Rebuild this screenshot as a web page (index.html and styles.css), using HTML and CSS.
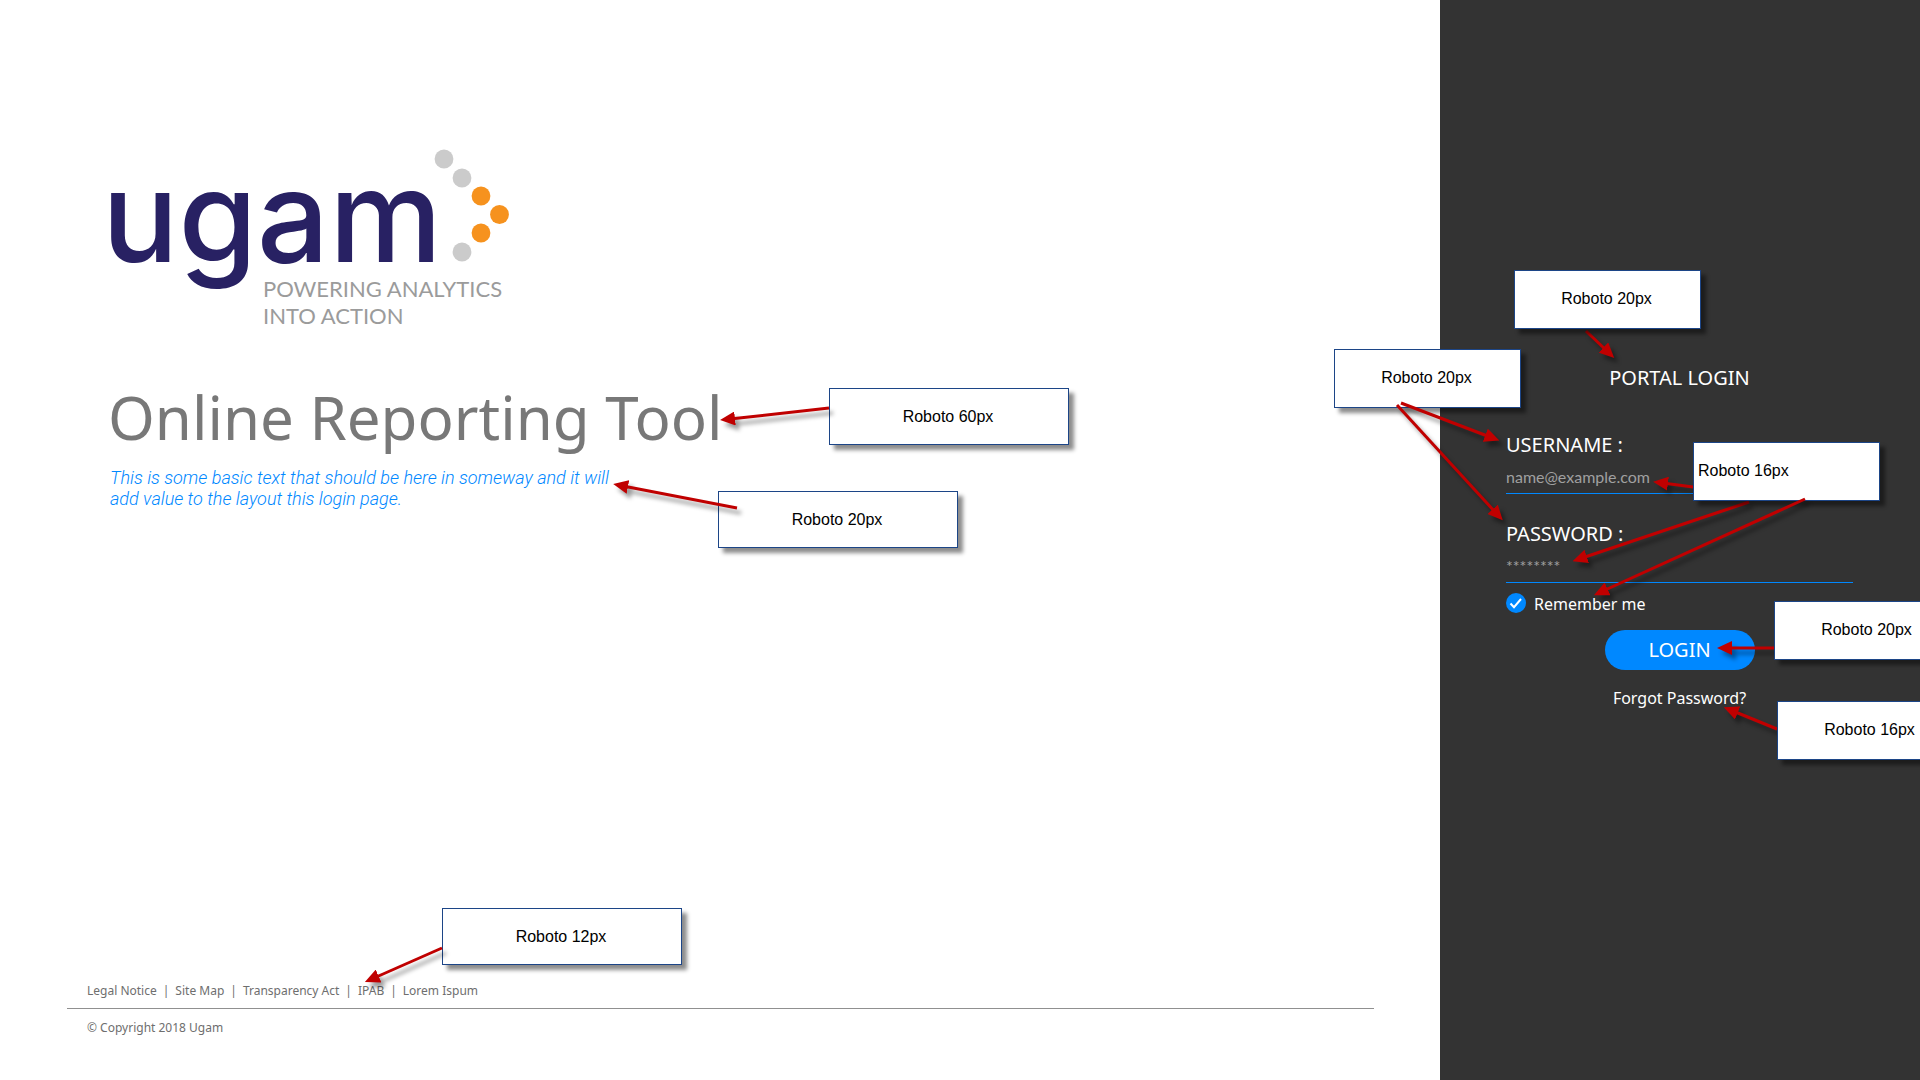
FILE: index.html
```html
<!DOCTYPE html>
<html lang="en">
<head>
<meta charset="utf-8">
<title>Ugam - Online Reporting Tool</title>
<link rel="stylesheet" href="styles.css">
</head>
<body>
<div class="page">
  <main class="intro">
    <svg class="logo" viewBox="0 0 400 184" role="img" aria-label="Ugam, powering analytics into action">
      <text class="logo-name" x="-8" y="116">ugam</text>
      <g class="logo-grey">
        <circle cx="334" cy="13" r="9.4"/>
        <circle cx="352" cy="32" r="9.4"/>
        <circle cx="352" cy="106" r="9.4"/>
      </g>
      <g class="logo-orange">
        <circle cx="371" cy="50" r="9.4"/>
        <circle cx="389.5" cy="68.5" r="9.4"/>
        <circle cx="371" cy="87" r="9.4"/>
      </g>
      <text class="logo-tag" x="153" y="151">POWERING ANALYTICS</text>
      <text class="logo-tag" x="153" y="178">INTO ACTION</text>
    </svg>
    <h1 class="title">Online Reporting Tool</h1>
    <p class="lead">This is some basic text that should be here in someway and it will add value to the layout this login page.</p>

    <footer class="footer">
      <ul class="links">
        <li><a href="#">Legal Notice</a></li>
        <li><a href="#">Site Map</a></li>
        <li><a href="#">Transparency Act</a></li>
        <li><a href="#">IPAB</a></li>
        <li><a href="#">Lorem Ispum</a></li>
      </ul>
      <p class="copyright">© Copyright 2018 Ugam</p>
      <div class="note note-wide note-footer">Roboto 12px</div>
      <svg class="arrows arrows-footer" aria-hidden="true">
        <line x1="375" y1="40" x2="307" y2="70"/>
      </svg>
    </footer>

    <div class="note note-wide note-title">Roboto 60px</div>
    <div class="note note-wide note-lead">Roboto 20px</div>
    <svg class="arrows arrows-intro" aria-hidden="true">
      <defs>
        <marker id="head" viewBox="0 0 15 14" markerWidth="15" markerHeight="14" refX="5" refY="7" orient="auto" markerUnits="userSpaceOnUse">
          <path d="M0 0 15 7 0 14z"/>
        </marker>
      </defs>
      <line x1="829" y1="408" x2="730" y2="419"/>
      <line x1="737" y1="508" x2="623" y2="486"/>
    </svg>
  </main>

  <aside class="panel">
    <form class="form">
      <h2 class="form-title">PORTAL LOGIN</h2>
      <div class="field">
        <label for="user">USERNAME :</label>
        <input id="user" type="text" placeholder="name@example.com">
      </div>
      <div class="field">
        <label for="pass">PASSWORD :</label>
        <input id="pass" type="password" placeholder="********">
      </div>
      <label class="remember">
        <span class="tick">
          <input type="checkbox" checked>
          <svg viewBox="0 0 20 20" aria-hidden="true"><path d="M4.5 10.5 8 14.2 15 6"/></svg>
        </span>
        Remember me
      </label>
      <button class="login" type="button">LOGIN</button>
      <a class="forgot" href="#">Forgot Password?</a>
    </form>

    <svg class="arrows arrows-panel" aria-hidden="true">
      <line x1="146" y1="331" x2="167" y2="351"/>
      <line x1="253" y1="487" x2="223" y2="483"/>
      <line x1="309" y1="502" x2="142" y2="558"/>
      <line x1="334" y1="648" x2="287" y2="648"/>
      <line x1="337" y1="729" x2="293" y2="711"/>
    </svg>
    <div class="note note-portal">Roboto 20px</div>
    <div class="note note-labels">Roboto 20px</div>
    <div class="note note-inputs">Roboto 16px</div>
    <div class="note note-login">Roboto 20px</div>
    <div class="note note-forgot">Roboto 16px</div>
    <svg class="arrows arrows-panel" aria-hidden="true">
      <line x1="-39" y1="403" x2="50" y2="437"/>
      <line x1="-43" y1="405" x2="56" y2="513"/>
      <line x1="365" y1="499" x2="163" y2="591"/>
    </svg>
  </aside>
</div>
</body>
</html>
```
FILE: styles.css
```css
* {
  box-sizing: border-box;
}

body {
  margin: 0;
  background: #fff;
  font-family: "Noto Sans", sans-serif;
}

h1, h2, p, ul {
  margin: 0;
  padding: 0;
  font-weight: 400;
}

a {
  color: inherit;
  text-decoration: none;
}

.page {
  display: grid;
  grid-template-columns: 3fr 1fr;
  min-height: 100vh;
  overflow: hidden;
}

/* Left side */
.intro {
  position: relative;
  display: flex;
  flex-direction: column;
  padding: 146px 66px 44px 67px;
}

.logo {
  width: 400px;
  height: 184px;
  margin-left: 43px;
  overflow: visible;
}

.logo-name {
  font: 500 127px Inter, sans-serif;
  fill: #282163;
}

.logo-tag {
  font: 400 22px Lato, sans-serif;
  fill: #9b9b9b;
}

.logo-grey {
  fill: #cbcbcb;
}

.logo-orange {
  fill: #f6921e;
}

.title {
  margin: 47px 0 0 41px;
  font-size: 60px;
  line-height: 80px;
  color: #787878;
}

.lead {
  max-width: 520px;
  margin: 10px 0 0 43px;
  font: italic 300 18px/21px Roboto, sans-serif;
  color: #0088ff;
}

.footer {
  position: relative;
  margin-top: auto;
  font-size: 12px;
  line-height: 16px;
  color: #6e6e6e;
}

.links {
  display: flex;
  padding: 0 20px 9px;
  border-bottom: 1px solid #909090;
  list-style: none;
}

.links li + li::before {
  content: "|";
  margin: 0 6px;
}

.copyright {
  padding: 11px 20px 0;
}

/* Login panel */
.panel {
  position: relative;
  padding: 364px 67px 60px 66px;
  background: #333;
  color: #fff;
}

.form {
  display: flex;
  flex-direction: column;
}

.form-title {
  margin-bottom: 39px;
  font-size: 20px;
  line-height: 28px;
  text-align: center;
}

.field {
  display: flex;
  flex-direction: column;
  gap: 3px;
  margin-bottom: 26px;
}

.field + .remember {
  margin-top: -16px;
}

.field label {
  font-size: 20px;
  line-height: 28px;
}

.field input {
  height: 32px;
  padding: 0 0 2px;
  border: 0;
  border-bottom: 1px solid #0088ff;
  outline: 0;
  background: none;
  font: 16px Lato, sans-serif;
  color: #fff;
}

.field input::placeholder {
  color: #a0a0a0;
  opacity: 1;
}

.remember {
  display: flex;
  align-items: flex-start;
  gap: 8px;
  font-size: 16px;
  line-height: 22px;
}

.tick {
  display: grid;
  width: 20px;
  height: 20px;
}

.tick input,
.tick svg {
  grid-area: 1 / 1;
  width: 20px;
  height: 20px;
  margin: 0;
}

.tick input {
  appearance: none;
  border-radius: 50%;
  background: #0088ff;
}

.tick svg {
  position: relative;
  fill: none;
  stroke: #fff;
  stroke-width: 2;
  pointer-events: none;
}

.login {
  align-self: center;
  width: 150px;
  height: 40px;
  margin: 15px 0 17px;
  padding: 0 0 2px;
  border: 0;
  border-radius: 20px;
  background: #0088ff;
  color: #fff;
  font: 20px "Noto Sans", sans-serif;
}

.forgot {
  align-self: center;
  font-size: 16px;
  line-height: 22px;
}

/* Font notes laid over the page */
.note {
  position: absolute;
  display: flex;
  align-items: center;
  justify-content: center;
  width: 187px;
  height: 59px;
  padding: 0 2px 2px 0;
  border: 1px solid #1c4587;
  background: #fff;
  box-shadow: 5px 5px 4px rgba(0, 0, 0, 0.45);
  color: #000;
  font: 16px "Liberation Sans", sans-serif;
}

.note-wide {
  width: 240px;
  height: 57px;
  padding-bottom: 0;
}

.note-title {
  top: 388px;
  left: 829px;
}

.note-lead {
  top: 491px;
  left: 718px;
}

.note-footer {
  top: -75px;
  left: 375px;
}

.note-portal {
  top: 270px;
  left: 74px;
}

.note-labels {
  top: 349px;
  left: -106px;
}

.note-inputs {
  top: 442px;
  left: 253px;
  justify-content: flex-start;
  padding-left: 4px;
}

.note-login {
  top: 601px;
  left: 334px;
}

.note-forgot {
  top: 701px;
  left: 337px;
}

.arrows {
  position: absolute;
  top: 0;
  left: 0;
  width: 100%;
  height: 100%;
  overflow: visible;
  stroke: #c00000;
  stroke-width: 3;
  pointer-events: none;
  filter: drop-shadow(4px 5px 2px rgba(0, 0, 0, 0.4));
}

.arrows-footer {
  top: -75px;
}

.arrows line {
  marker-end: url(#head);
}

#head path {
  fill: #c00000;
  stroke: none;
}
```
